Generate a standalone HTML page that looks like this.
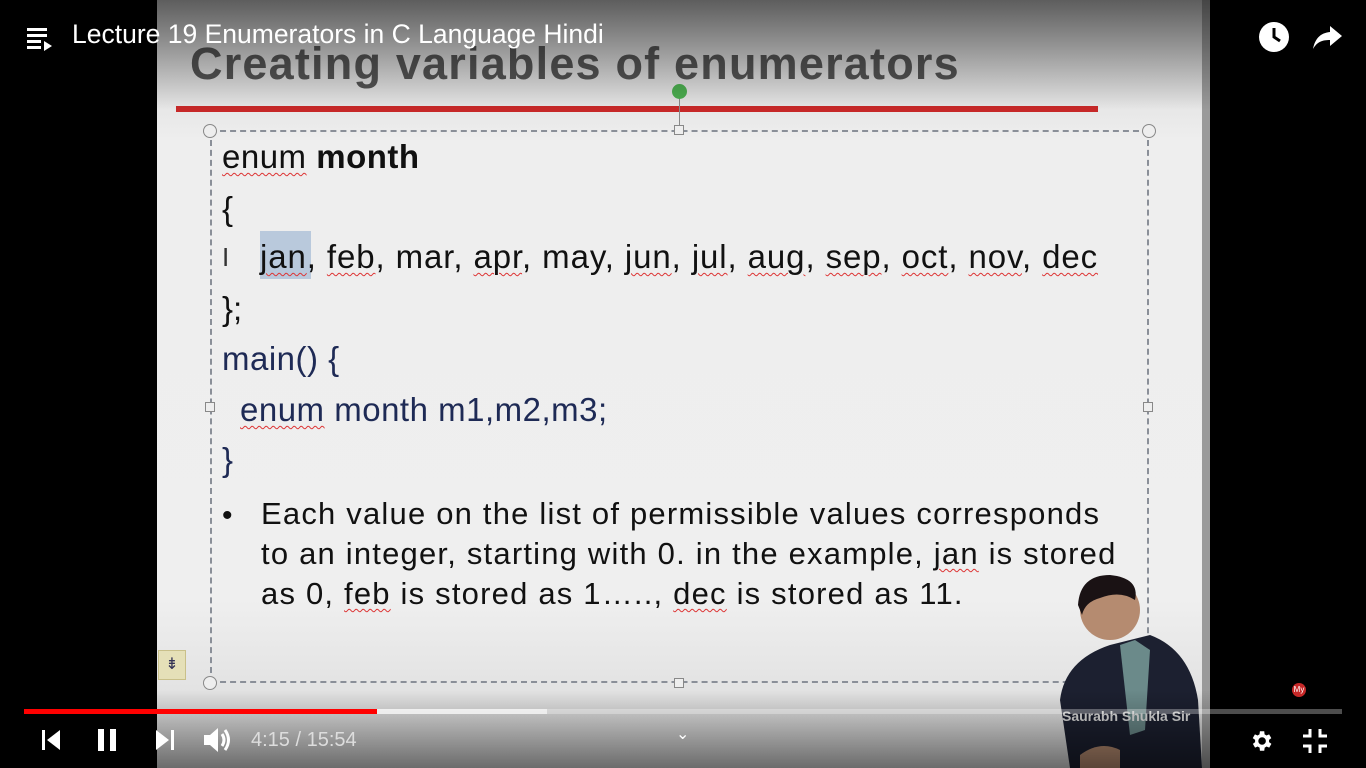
<!DOCTYPE html>
<html><head><style>
*{margin:0;padding:0;box-sizing:border-box}
body{width:1366px;height:768px;background:#000;position:relative;overflow:hidden;font-family:"Liberation Sans",sans-serif}
.slide{position:absolute;left:157px;top:0;width:1053px;height:768px;background:linear-gradient(#cfcfcf 0,#eeeeee 140px,#efefef 600px,#d8d8d8 768px)}
.edge{position:absolute;left:1202px;top:0;width:8px;height:768px;background:#9a9a9a}
.t{position:absolute;white-space:nowrap;color:#111;font-size:33px;transform-origin:0 0}
.code{color:#1e2a55}
.topshade{position:absolute;left:0;top:0;width:1366px;height:110px;background:linear-gradient(rgba(0,0,0,.55),rgba(0,0,0,0))}
.botshade{position:absolute;left:0;top:690px;width:1366px;height:78px;background:linear-gradient(rgba(0,0,0,0),rgba(0,0,0,.5))}
.sq{position:absolute;width:10px;height:10px;border:1.5px solid #888;background:#eee}
.ci{position:absolute;width:14px;height:14px;border:1.5px solid #888;border-radius:50%;background:#eee}
u{text-decoration:underline wavy #d33 1px;text-underline-offset:4px}
</style></head><body>
<div class="slide"></div>
<div class="edge"></div>
<div class="t" style="left:190px;top:38px;font-size:45px;font-weight:bold;color:#555;letter-spacing:1.2px">Creating variables of enumerators</div>
<div style="position:absolute;left:176px;top:106px;width:922px;height:6px;background:#c62828"></div>
<div style="position:absolute;left:679px;top:92px;width:1px;height:36px;background:#888"></div>
<div style="position:absolute;left:672px;top:84px;width:15px;height:15px;border-radius:50%;background:#4caf50"></div>
<div style="position:absolute;left:210px;top:130px;width:939px;height:553px;border:2px dashed #8a8f98"></div>
<div class="ci" style="left:203px;top:124px"></div><div class="ci" style="left:1142px;top:124px"></div>
<div class="ci" style="left:203px;top:676px"></div><div class="ci" style="left:1142px;top:676px;background:#fff"></div>
<div class="sq" style="left:674px;top:125px"></div><div class="sq" style="left:674px;top:678px"></div>
<div class="sq" style="left:205px;top:402px"></div><div class="sq" style="left:1143px;top:402px"></div>
<div style="position:absolute;left:158px;top:650px;width:28px;height:30px;background:#e5e0b8;border:1px solid #c9c08a;color:#335;font-size:16px;text-align:center;line-height:28px">⇟</div>
<div style="position:absolute;left:260px;top:231px;width:51px;height:48px;background:#b9c9dc"></div>
<div class="t" style="left:222px;top:138px;letter-spacing:0.5px"><u>enum</u> <b>month</b></div>
<div class="t" style="left:222px;top:190px">{</div>
<div class="t" style="left:222px;top:242px;font-size:26px;color:#333">I</div>
<div class="t" style="left:260px;top:238px;letter-spacing:0.9px"><u>jan</u>, <u>feb</u>, mar, <u>apr</u>, may, <u>jun</u>, <u>jul</u>, <u>aug</u>, <u>sep</u>, <u>oct</u>, <u>nov</u>, <u>dec</u></div>
<div class="t" style="left:222px;top:290px">};</div>
<div class="t code" style="left:222px;top:340px;letter-spacing:0.5px">main() {</div>
<div class="t code" style="left:240px;top:391px;letter-spacing:0.5px"><u>enum</u> month m1,m2,m3;</div>
<div class="t code" style="left:222px;top:441px">}</div>
<div class="t" style="left:222px;top:496px;font-size:30px;line-height:40px">•</div>
<div class="t" style="left:261px;top:494px;font-size:31px;line-height:40px;letter-spacing:1.2px">Each value on the list of permissible values corresponds<br>to an integer, starting with 0. in the example, <u>jan</u> is stored<br>as 0, <u>feb</u> is stored as 1….., <u>dec</u> is stored as 11.</div>
<svg style="position:absolute;left:1040px;top:560px" width="170" height="208">
<path d="M20 140 Q25 100 70 85 L110 75 Q150 90 158 140 L162 208 L30 208 Z" fill="#1c2030"/>
<path d="M80 85 L95 80 L110 90 L105 170 L90 175 Z" fill="#6b8a8a"/>
<ellipse cx="70" cy="50" rx="30" ry="30" fill="#b58b70"/>
<path d="M38 45 Q40 15 70 15 Q100 18 95 40 Q80 30 60 38 Q45 42 42 55 Z" fill="#1a1214"/>
<path d="M40 195 Q60 180 80 190 L80 208 L40 208 Z" fill="#b58b70"/>
</svg>
<div class="t" style="left:1062px;top:708px;font-size:14px;color:#ddd;font-weight:bold">Saurabh Shukla Sir</div>
<div class="topshade"></div><div class="botshade"></div>
<svg style="position:absolute;left:27px;top:28px" width="28" height="24"><g fill="#fff"><rect x="0" y="0" width="20" height="3"/><rect x="0" y="6" width="20" height="3"/><rect x="0" y="12" width="14" height="3"/><rect x="0" y="18" width="14" height="3"/><path d="M17 13 L25 18 L17 23Z"/></g></svg>
<div class="t" style="left:72px;top:19px;font-size:26.5px;color:#fff">Lecture 19 Enumerators in C Language Hindi</div>
<svg style="position:absolute;left:1258px;top:21px" width="32" height="32"><circle cx="16" cy="16" r="15" fill="#fff"/><path d="M16 7 V16 L22 20" stroke="#000" stroke-width="3" fill="none"/></svg>
<svg style="position:absolute;left:1312px;top:24px" width="32" height="26"><path d="M18 2 L30 12 L18 22 V16 C10 16 5 18 1 25 C3 15 8 9 18 8Z" fill="#fff"/></svg>
<div style="position:absolute;left:1292px;top:683px;width:14px;height:14px;border-radius:50%;background:#c62828;color:#fff;font-size:8px;text-align:center;line-height:14px">My</div>
<div style="position:absolute;left:24px;top:709px;width:1318px;height:5px;background:rgba(255,255,255,.3)"></div>
<div style="position:absolute;left:24px;top:709px;width:523px;height:5px;background:rgba(255,255,255,.6)"></div>
<div style="position:absolute;left:24px;top:709px;width:353px;height:5px;background:#f00"></div>
<svg style="position:absolute;left:40px;top:728px" width="24" height="24"><rect x="2" y="2" width="3" height="20" fill="#fff"/><path d="M20 2 L7 12 L20 22Z" fill="#fff"/></svg>
<svg style="position:absolute;left:96px;top:728px" width="24" height="24"><rect x="2" y="1" width="6" height="22" fill="#fff"/><rect x="14" y="1" width="6" height="22" fill="#fff"/></svg>
<svg style="position:absolute;left:154px;top:728px" width="24" height="24"><path d="M2 2 L15 12 L2 22Z" fill="#fff"/><rect x="17" y="2" width="3" height="20" fill="#fff"/></svg>
<svg style="position:absolute;left:202px;top:725px" width="32" height="30"><path d="M2 10 H8 L16 3 V27 L8 20 H2Z" fill="#fff"/><path d="M20 9 Q24 15 20 21 M23 5 Q30 15 23 25" stroke="#fff" stroke-width="3" fill="none"/></svg>
<div class="t" style="left:251px;top:729px;font-size:20px;color:#ddd">4:15 / 15:54</div>
<div class="t" style="left:676px;top:724px;font-size:16px;color:#fff">⌄</div>
<svg style="position:absolute;left:1248px;top:728px" width="26" height="26" viewBox="0 0 24 24"><path fill="#fff" d="M19.4 13a7.5 7.5 0 000-2l2.1-1.6-2-3.5-2.5 1a7 7 0 00-1.7-1L15 3h-4l-.4 2.9a7 7 0 00-1.7 1l-2.5-1-2 3.5L6.6 11a7.5 7.5 0 000 2l-2.1 1.6 2 3.5 2.5-1a7 7 0 001.7 1L11 21h4l.4-2.9a7 7 0 001.7-1l2.5 1 2-3.5zM13 15.5A3.5 3.5 0 1113 8.5a3.5 3.5 0 010 7z"/></svg>
<svg style="position:absolute;left:1302px;top:728px" width="26" height="26"><path d="M8 1 V8 H1 M18 1 V8 H25 M8 25 V18 H1 M18 25 V18 H25" stroke="#fff" stroke-width="3" fill="none"/></svg>
</body></html>
